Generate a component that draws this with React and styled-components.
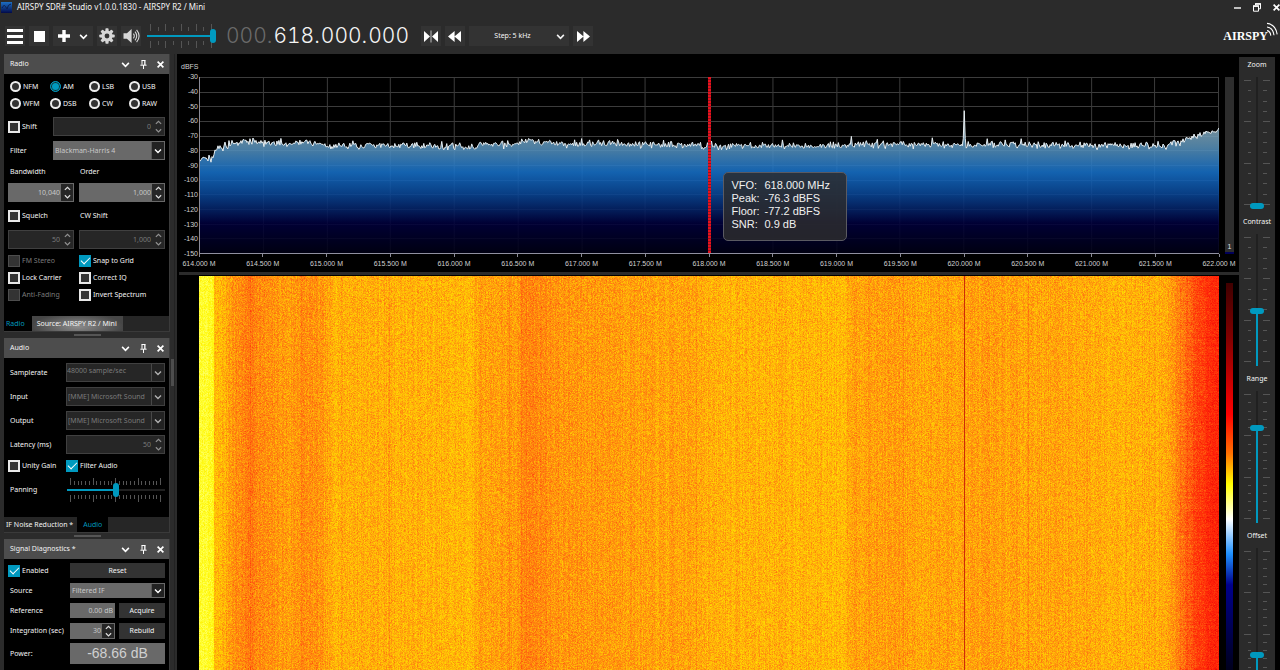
import { useLayoutEffect, useRef, useState } from 'react';
import styled, { createGlobalStyle, css } from 'styled-components';

const color = {
  chrome: '#2b2b2b',
  button: '#333333',
  header: '#4d4d4d',
  field: '#696969',
  dark: '#262626',
  accent: '#0099bf',
  txt: '#f4f4f4',
  dim: '#7a7a7a',
};

/* ---------- signal data ---------- */

const makeRandom = (seed) => {
  let s = seed;
  return () => {
    s = (s * 1664525 + 1013904223) % 4294967296;
    return s / 4294967296;
  };
};

const SPAN = 1020;

// noise floor in dBFS along the band
const FLOOR = [
  [0, -86], [12, -85], [14, -84], [15, -78], [26, -77], [30, -75.5], [40, -74.6], [52, -73.6],
  [66, -75], [90, -75.8], [102, -74.9], [118, -75.2], [132, -76.8], [190, -76.8], [205, -77],
  [240, -77.2], [272, -77.4], [282, -76], [318, -75.8], [324, -74], [345, -74.6], [360, -75.4],
  [430, -75.6], [450, -76.2], [500, -76.2], [512, -77], [580, -77.1], [644, -77.4],
  [652, -75.9], [700, -75.8], [720, -76.3], [770, -76], [860, -76.2], [930, -76.9],
  [968, -76.6], [980, -74], [990, -71.8], [1000, -69.8], [1010, -68], [1020, -67],
];

const LINES = { 51: 1.8, 102: 1.2, 142: 1, 190: 2, 218: 1, 281: 1.3, 310: 1, 322: 1.6, 497: 1.6, 704: 1.2, 829: 1.4 };

const floorAt = (x) => {
  const i = FLOOR.findIndex(([px]) => px >= x);
  if (i <= 0) return FLOOR[0][1];
  const [x0, v0] = FLOOR[i - 1];
  const [x1, v1] = FLOOR[i];
  return v0 + ((v1 - v0) * (x - x0)) / (x1 - x0);
};

const dbToY = (db) => ((-30 - db) * 176) / 120;

const buildTrace = () => {
  const rnd = makeRandom(91);
  const points = [];
  for (let x = 0; x <= SPAN; x += 1) {
    const noise = (rnd() + rnd() + rnd() - 1.5) * 2.6;
    const peak = rnd() > 0.95 ? 2 : 0;
    let db = floorAt(x) + noise + peak;
    if (x === 764 || x === 766) db = -72;
    if (x === 765) db = -53;
    points.push(`${x},${dbToY(db).toFixed(1)}`);
  }
  return points.join(' ');
};

const TRACE = buildTrace();

const HEAT = [
  [-92, 255, 255, 150], [-87, 255, 255, 80], [-84, 255, 250, 20], [-80, 255, 222, 0],
  [-77, 255, 184, 8], [-75, 255, 148, 14], [-72, 255, 104, 16], [-69, 255, 60, 10],
  [-66, 255, 32, 8], [-60, 215, 0, 0],
];

const heat = (db) => {
  if (db <= HEAT[0][0]) return HEAT[0].slice(1);
  for (let i = 1; i < HEAT.length; i += 1) {
    if (db <= HEAT[i][0]) {
      const a = HEAT[i - 1];
      const b = HEAT[i];
      const t = (db - a[0]) / (b[0] - a[0]);
      return [1, 2, 3].map((k) => a[k] + (b[k] - a[k]) * t);
    }
  }
  return HEAT[HEAT.length - 1].slice(1);
};

const Waterfall = () => {
  const ref = useRef(null);

  useLayoutEffect(() => {
    const canvas = ref.current;
    const draw = () => {
      const w = canvas.clientWidth;
      const h = canvas.clientHeight;
      if (!w || !h) return;
      canvas.width = w;
      canvas.height = h;
      const ctx = canvas.getContext('2d');
      const img = ctx.createImageData(w, h);
      const rnd = makeRandom(7);
      const columns = Array.from({ length: w }, (_, x) => {
        const pos = Math.round((x * SPAN) / w);
        return floorAt(pos) + 0.3 + (LINES[pos] || 0) + (rnd() - 0.5) * 1.4;
      });
      const carrier = Math.round((765 * w) / SPAN);
      for (let y = 0; y < h; y += 1) {
        const row = (rnd() - 0.5) * 1.4;
        for (let x = 0; x < w; x += 1) {
          const edge = x / w > 0.96 ? row + Math.min(0.8, y / 300) : 0;
          const db = columns[x] + edge + (rnd() + rnd() + rnd() - 1.5) * 2.6;
          const [r, g, b] = x === carrier ? [205, 45, 6] : heat(db);
          const at = (y * w + x) * 4;
          img.data[at] = r;
          img.data[at + 1] = g;
          img.data[at + 2] = b;
          img.data[at + 3] = 255;
        }
      }
      ctx.putImageData(img, 0, 0);
    };
    draw();
    window.addEventListener('resize', draw);
    return () => window.removeEventListener('resize', draw);
  }, []);

  return <WaterfallCanvas ref={ref} aria-label='Waterfall' />;
};

/* ---------- small drawings ---------- */

const Chevron = ({ up, size = 7 }) => (
  <svg width={size} height={size} viewBox='0 0 8 8' aria-hidden='true'>
    <path
      d={up ? 'M1 5.6 4 2.6 7 5.6' : 'M1 2.6 4 5.6 7 2.6'}
      fill='none'
      stroke='currentColor'
      strokeWidth='1.4'
    />
  </svg>
);

const PinIcon = () => (
  <svg width='7' height='9' viewBox='0 0 7 9' aria-hidden='true'>
    <path d='M1.5 .5h4M2 .5v4.3M.4 5.2h6.2M3.5 5v4' fill='none' stroke='currentColor' />
    <path d='M4.2 .5h1.3v4.5H4.2z' fill='currentColor' />
  </svg>
);

const CrossIcon = ({ size = 7 }) => (
  <svg width={size} height={size} viewBox='0 0 7 7' aria-hidden='true'>
    <path d='M.6 .6 6.4 6.4M6.4 .6 .6 6.4' stroke='currentColor' strokeWidth='1.7' />
  </svg>
);

const GearIcon = () => (
  <svg width='16' height='16' viewBox='0 0 16 16' aria-hidden='true'>
    <g fill='currentColor'>
      {[0, 45, 90, 135].map((a) => (
        <rect key={a} x='6.4' y='.3' width='3.2' height='15.4' rx='.8' transform={`rotate(${a} 8 8)`} />
      ))}
      <circle cx='8' cy='8' r='5.6' />
    </g>
    <circle cx='8' cy='8' r='2.4' fill={color.button} />
  </svg>
);

const SpeakerIcon = () => (
  <svg width='17' height='16' viewBox='0 0 17 16' aria-hidden='true'>
    <path d='M.5 5.2h3.4L8.6 1v14L3.9 10.8H.5z' fill='currentColor' />
    <path
      d='M10.4 5.6q1.8 2.4 0 4.8M12 3.6q3.4 4.4 0 8.8M13.6 1.8q5 6.2 0 12.4'
      fill='none'
      stroke='currentColor'
      strokeWidth='1.1'
    />
  </svg>
);

const SkipIcon = ({ kind }) => {
  const paths = {
    center: 'M0 1 6 6.5 0 12zM14 1 8 6.5 14 12z',
    back: 'M6.6 1 0 6.5 6.6 12zM13 1 6.4 6.5 13 12z',
    forward: 'M1 1 7.6 6.5 1 12zM7.4 1 14 6.5 7.4 12z',
  };
  return (
    <svg width='14' height='13' viewBox='0 0 14 13' aria-hidden='true'>
      <path d={paths[kind]} fill='currentColor' />
      {kind === 'center' && <path d='M7 .5v12' stroke='#bdbdbd' />}
    </svg>
  );
};

// tick scale shown on both sides of a slider
const Scale = ({ vertical, length, count, every, inset }) => {
  const breadth = 26;
  const step = (length - inset * 2) / (count - 1);
  return (
    <ScaleSvg width={vertical ? breadth : length} height={vertical ? length : breadth} aria-hidden='true'>
      {Array.from({ length: count }, (_, i) => {
        const at = Math.round(inset + i * step);
        const major = i % every === 0;
        const size = major ? 7 : 4;
        return vertical ? (
          <g key={i}>
            <rect x={major ? 0 : 4} y={at - 1} width={major ? 7 : 3} height='1' />
            <rect x='19' y={at - 1} width={size} height='1' />
          </g>
        ) : (
          <g key={i}>
            <rect x={at - 1} y={8 - size} width='1' height={size} />
            <rect x={at - 1} y='18' width='1' height={size} />
          </g>
        );
      })}
    </ScaleSvg>
  );
};

/* ---------- form parts ---------- */

const Slider = ({ label, vertical, length, count, every, start, inset = 4 }) => {
  const [value, setValue] = useState(start);
  return (
    <SliderBox>
      <Scale vertical={vertical} length={length} count={count} every={every} inset={inset} />
      <RangeInput
        type='range'
        aria-label={label}
        min='0'
        max='1000'
        value={value}
        onChange={(e) => setValue(Number(e.target.value))}
        $vertical={vertical}
        $length={length}
        $fill={value / 10}
      />
    </SliderBox>
  );
};

const Spin = ({ label, value, disabled }) => (
  <FieldBox $disabled={disabled}>
    <FieldInput aria-label={label} defaultValue={value} disabled={disabled} size={1} />
    <SpinButtons>
      <button type='button' aria-label={`${label} up`} disabled={disabled}>
        <Chevron up />
      </button>
      <button type='button' aria-label={`${label} down`} disabled={disabled}>
        <Chevron />
      </button>
    </SpinButtons>
  </FieldBox>
);

const Select = ({ label, value, disabled, raised }) => (
  <FieldBox $disabled={disabled}>
    <FieldSelect aria-label={label} disabled={disabled} $raised={raised}>
      <option>{value}</option>
    </FieldSelect>
    <SelectArrow $disabled={disabled}>
      <Chevron size={8} />
    </SelectArrow>
  </FieldBox>
);

const Check = ({ label, checked, disabled }) => (
  <CheckLabel $disabled={disabled}>
    <CheckInput type='checkbox' defaultChecked={checked} disabled={disabled} />
    {label}
  </CheckLabel>
);

const PanelHeader = ({ title }) => (
  <HeaderBar>
    <h2>{title}</h2>
    <button type='button' aria-label='Collapse'>
      <Chevron size={9} />
    </button>
    <button type='button' aria-label='Pin'>
      <PinIcon />
    </button>
    <button type='button' aria-label='Close'>
      <CrossIcon />
    </button>
  </HeaderBar>
);

/* ---------- panels ---------- */

const RadioPanel = () => (
  <Panel>
    <PanelHeader title='Radio' />
    <PanelBody>
      <ModeGrid>
        {['NFM', 'AM', 'LSB', 'USB', 'WFM', 'DSB', 'CW', 'RAW'].map((mode) => (
          <ModeLabel key={mode}>
            <ModeInput type='radio' name='mode' defaultChecked={mode === 'AM'} />
            {mode}
          </ModeLabel>
        ))}
      </ModeGrid>
      <Stack>
        <Row $label={45}>
          <Check label='Shift' />
          <Spin label='Shift' value='0' disabled />
        </Row>
        <Row $label={45}>
          <RowLabel>Filter</RowLabel>
          <Select label='Filter' value='Blackman-Harris 4' />
        </Row>
        <PairRow $height={13}>
          <RowLabel>Bandwidth</RowLabel>
          <RowLabel $flush>Order</RowLabel>
        </PairRow>
        <PairRow $height={19}>
          <Spin label='Bandwidth' value='10,040' />
          <Spin label='Order' value='1,000' />
        </PairRow>
        <PairRow $height={18}>
          <Check label='Squelch' />
          <RowLabel $flush>CW Shift</RowLabel>
        </PairRow>
        <PairRow $height={19}>
          <Spin label='Squelch' value='50' disabled />
          <Spin label='CW Shift' value='1,000' disabled />
        </PairRow>
      </Stack>
      <CheckGrid>
        <Check label='FM Stereo' disabled />
        <Check label='Snap to Grid' checked />
        <Check label='Lock Carrier' />
        <Check label='Correct IQ' />
        <Check label='Anti-Fading' disabled />
        <Check label='Invert Spectrum' />
      </CheckGrid>
    </PanelBody>
    <TabBar>
      <Tab type='button' $active>Radio</Tab>
      <Tab type='button' $glow>Source: AIRSPY R2 / Mini</Tab>
    </TabBar>
  </Panel>
);

const AudioPanel = () => (
  <Panel>
    <PanelHeader title='Audio' />
    <PanelBody $top={5}>
      <Stack>
        <Row $label={58}>
          <RowLabel>Samplerate</RowLabel>
          <Select label='Samplerate' value='48000 sample/sec' disabled raised />
        </Row>
        <Row $label={58}>
          <RowLabel>Input</RowLabel>
          <Select label='Input' value='[MME] Microsoft Sound' disabled />
        </Row>
        <Row $label={58}>
          <RowLabel>Output</RowLabel>
          <Select label='Output' value='[MME] Microsoft Sound' disabled />
        </Row>
        <Row $label={58}>
          <RowLabel>Latency (ms)</RowLabel>
          <Spin label='Latency' value='50' disabled />
        </Row>
      </Stack>
      <CheckPair>
        <Check label='Unity Gain' />
        <Check label='Filter Audio' checked />
      </CheckPair>
      <PanningRow>
        <RowLabel>Panning</RowLabel>
        <Slider label='Panning' length={98} count={25} every={6} start={500} />
      </PanningRow>
    </PanelBody>
    <TabBar>
      <Tab type='button'>IF Noise Reduction *</Tab>
      <Tab type='button' $active>Audio</Tab>
    </TabBar>
  </Panel>
);

const DiagnosticsPanel = () => (
  <Panel $last>
    <PanelHeader title='Signal Diagnostics *' />
    <PanelBody>
      <Stack>
        <Row $label={62} $height={15}>
          <Check label='Enabled' checked />
          <PanelButton type='button'>Reset</PanelButton>
        </Row>
        <Row $label={62} $height={15}>
          <RowLabel>Source</RowLabel>
          <Select label='Source' value='Filtered IF' />
        </Row>
        <Row $label={62} $height={15}>
          <RowLabel>Reference</RowLabel>
          <Split>
            <FieldBox>
              <FieldInput aria-label='Reference' defaultValue='0.00 dB' size={1} />
            </FieldBox>
            <PanelButton type='button'>Acquire</PanelButton>
          </Split>
        </Row>
        <Row $label={62} $height={15}>
          <RowLabel>Integration (sec)</RowLabel>
          <Split>
            <Spin label='Integration' value='30' />
            <PanelButton type='button'>Rebuild</PanelButton>
          </Split>
        </Row>
        <Row $label={62} $height={21}>
          <RowLabel>Power:</RowLabel>
          <PowerOutput>-68.66 dB</PowerOutput>
        </Row>
      </Stack>
    </PanelBody>
  </Panel>
);

const frequencies = Array.from({ length: 17 }, (_, i) => `${(614 + i / 2).toFixed(3)} M`);
const levels = Array.from({ length: 13 }, (_, i) => -30 - i * 10);

const Spectrum = () => (
  <SpectrumArea>
    <Unit>dBFS</Unit>
    <AxisY>
      {levels.map((v) => (
        <span key={v}>{v}</span>
      ))}
    </AxisY>
    <Plot>
      <svg width='100%' height='100%' viewBox='0 0 1020 176' preserveAspectRatio='none' role='img' aria-label='Spectrum'>
        <defs>
          <linearGradient id='fill' gradientUnits='userSpaceOnUse' x1='0' y1='0' x2='0' y2='176'>
            <stop offset='.28' stopColor='#86a4b0' />
            <stop offset='.4' stopColor='#5890b8' />
            <stop offset='.54' stopColor='#1670c8' />
            <stop offset='.66' stopColor='#0a4898' />
            <stop offset='.76' stopColor='#042064' />
            <stop offset='.83' stopColor='#00003c' />
            <stop offset='1' stopColor='#000014' />
          </linearGradient>
        </defs>
        <g stroke='#3c3c3c'>
          {levels.slice(0, -1).map((v) => (
            <line key={v} x1='0' x2='1020' y1={Math.round(dbToY(v)) + 0.5} y2={Math.round(dbToY(v)) + 0.5} />
          ))}
          {frequencies.map((f, i) => (
            <line key={f} y1='0' y2='176' x1={Math.round(i * 63.75) - 0.5} x2={Math.round(i * 63.75) - 0.5} />
          ))}
        </g>
        <polygon points={`0,176 ${TRACE} 1020,176`} fill='url(#fill)' fillOpacity='.88' />
        <polyline points={TRACE} fill='none' stroke='#e6eef2' strokeWidth='1' />
      </svg>
      <VfoLine />
      <Tooltip role='status'>
        <span>VFO:</span>
        <span>618.000 MHz</span>
        <span>Peak:</span>
        <span>-76.3 dBFS</span>
        <span>Floor:</span>
        <span>-77.2 dBFS</span>
        <span>SNR:</span>
        <span>0.9 dB</span>
      </Tooltip>
    </Plot>
    <Meter>1</Meter>
    <AxisX>
      {frequencies.map((f) => (
        <span key={f}>{f}</span>
      ))}
    </AxisX>
  </SpectrumArea>
);

const App = () => (
  <Page>
    <GlobalStyle />
    <TitleBar>
      <svg width='11' height='11' viewBox='0 0 11 11' aria-hidden='true'>
        <defs>
          <linearGradient id='icon' x1='0' y1='0' x2='0' y2='1'>
            <stop offset='0' stopColor='#1d6fc4' />
            <stop offset='1' stopColor='#020a4a' />
          </linearGradient>
        </defs>
        <rect width='11' height='11' fill='url(#icon)' />
        <path d='M1 6q2-4 3.5-1.5T6 7q1-5 4-5' fill='none' stroke='#0a2050' />
      </svg>
      <h1>AIRSPY SDR# Studio v1.0.0.1830 - AIRSPY R2 / Mini</h1>
      <WindowButtons>
        <button type='button' aria-label='Minimize'>
          <svg width='7' height='7' viewBox='0 0 7 7'>
            <path d='M0 4h7' stroke='currentColor' strokeWidth='1.4' />
          </svg>
        </button>
        <button type='button' aria-label='Restore'>
          <svg width='8' height='9' viewBox='0 0 8 9'>
            <path d='M2.5 2V.8h5v5H6M.5 3.2h5v5h-5z' fill='none' stroke='currentColor' />
            <path d='M0 3h6M2 1h6' stroke='currentColor' strokeWidth='1.4' />
          </svg>
        </button>
        <button type='button' aria-label='Close window'>
          <CrossIcon />
        </button>
      </WindowButtons>
    </TitleBar>

    <Toolbar>
      <ToolButton type='button' aria-label='Menu'>
        <svg width='16' height='15' viewBox='0 0 16 15'>
          <path d='M0 1.5h16M0 7.5h16M0 13.5h16' stroke='currentColor' strokeWidth='2.8' />
        </svg>
      </ToolButton>
      <ToolButton type='button' aria-label='Stop'>
        <svg width='11' height='11' viewBox='0 0 11 11'>
          <rect width='11' height='11' fill='currentColor' />
        </svg>
      </ToolButton>
      <ToolButton type='button' aria-label='Add' $wide>
        <svg width='12' height='12' viewBox='0 0 12 12'>
          <path d='M6 0v12M0 6h12' stroke='currentColor' strokeWidth='3.4' />
        </svg>
        <Chevron size={9} />
      </ToolButton>
      <ToolButton type='button' aria-label='Settings' $soft>
        <GearIcon />
      </ToolButton>
      <ToolButton type='button' aria-label='Mute' $soft>
        <SpeakerIcon />
      </ToolButton>
      <VolumeSlot>
        <Slider label='Volume' length={69} count={9} every={2} start={1000} />
      </VolumeSlot>
      <Frequency>
        <i>
          000<b>.</b>
        </i>
        618<b>.</b>000<b>.</b>000
      </Frequency>
      <ToolButton type='button' aria-label='Center'>
        <SkipIcon kind='center' />
      </ToolButton>
      <ToolButton type='button' aria-label='Step back'>
        <SkipIcon kind='back' />
      </ToolButton>
      <StepBox>
        <select aria-label='Step'>
          <option>Step: 5 kHz</option>
        </select>
        <Chevron size={9} />
      </StepBox>
      <ToolButton type='button' aria-label='Step forward'>
        <SkipIcon kind='forward' />
      </ToolButton>
      <Brand>
        AIRSPY
        <svg width='11' height='15' viewBox='0 0 11 15' aria-hidden='true'>
          <path
            d='M0 8.6q3.4.6 3.8 5M0 5q6 .8 7 8.2M0 1.4q8.8 1 10.2 11'
            fill='none'
            stroke='currentColor'
            strokeWidth='1.1'
          />
        </svg>
      </Brand>
    </Toolbar>

    <Body>
      <Dock>
        <DockPanels>
          <RadioPanel />
          <Splitter />
          <AudioPanel />
          <Splitter />
          <DiagnosticsPanel />
        </DockPanels>
        <ScrollTrack>
          <ScrollThumb />
        </ScrollTrack>
      </Dock>

      <Display>
        <Spectrum />
        <Divider />
        <WaterfallRow>
          <Waterfall />
          <HeatBar />
        </WaterfallRow>
      </Display>

      <SliderColumn>
        <SliderTitle>Zoom</SliderTitle>
        <Slider label='Zoom' vertical length={132} count={13} every={4} start={0} />
        <SliderTitle>Contrast</SliderTitle>
        <Slider label='Contrast' vertical length={132} count={13} every={4} start={410} />
        <SliderTitle>Range</SliderTitle>
        <Slider label='Range' vertical length={132} count={16} every={5} start={730} />
        <SliderTitle>Offset</SliderTitle>
        <Slider label='Offset' vertical length={132} count={16} every={5} start={175} />
      </SliderColumn>
    </Body>
  </Page>
);

/* ---------- styles ---------- */

const GlobalStyle = createGlobalStyle`
  * {
    box-sizing: border-box;
  }
  body {
    margin: 0;
    background: #000;
    color: ${color.txt};
    font: 7px/10px 'Noto Sans', 'Open Sans', sans-serif;
  }
  button, input, select {
    margin: 0;
    padding: 0;
    border: 0;
    border-radius: 0;
    background: none;
    color: inherit;
    font: inherit;
    appearance: none;
    outline: none;
  }
  select:disabled {
    opacity: 1;
  }
  h1, h2 {
    margin: 0;
    font-weight: 400;
  }
  svg {
    display: block;
    flex: none;
  }
`;

const Page = styled.div`
  display: flex;
  flex-direction: column;
  height: 100vh;
  overflow: hidden;
`;

const TitleBar = styled.header`
  display: flex;
  align-items: center;
  gap: 5px;
  height: 14px;
  padding-left: 1px;
  background: ${color.chrome};
  h1 {
    flex: 1;
    font-size: 8px;
    line-height: 14px;
  }
`;

const WindowButtons = styled.div`
  display: flex;
  gap: 12px;
  color: #fff;
  button {
    display: flex;
    align-items: center;
  }
`;

const Toolbar = styled.div`
  display: flex;
  align-items: center;
  gap: 4px;
  height: 40px;
  padding: 4px 2px 0 5px;
  background: ${color.chrome};
`;

const ToolButton = styled.button`
  display: flex;
  align-items: center;
  justify-content: center;
  gap: 9px;
  width: ${(props) => (props.$wide ? '40px' : '20px')};
  height: 20px;
  background: ${color.button};
  color: ${(props) => (props.$soft ? '#d6d6d6' : '#fff')};
`;

const VolumeSlot = styled.div`
  margin: 0 6px 0 2px;
`;

const Frequency = styled.output`
  margin-right: 8px;
  color: #f4f4f4;
  font: 300 21px/24px Inter, 'Noto Sans', sans-serif;
  font-variant-numeric: tabular-nums;
  i {
    color: #6a6a6a;
    font-style: normal;
  }
  b {
    padding-right: 1px;
    font-weight: 300;
  }
`;

const StepBox = styled.div`
  display: flex;
  align-items: center;
  width: 100px;
  height: 20px;
  padding-right: 4px;
  background: ${color.button};
  select {
    flex: 1;
    height: 20px;
    text-align-last: center;
  }
`;

const Brand = styled.div`
  display: flex;
  align-items: flex-start;
  margin-left: auto;
  color: #fff;
  font: 700 12px/22px 'Liberation Serif', serif;
  svg {
    margin-top: -3px;
    margin-left: -1px;
  }
`;

const Body = styled.main`
  display: flex;
  flex: 1;
  min-height: 0;
  padding-right: 5px;
`;

const Dock = styled.aside`
  display: flex;
  width: 177px;
  padding-left: 4px;
  background: ${color.chrome};
`;

const DockPanels = styled.div`
  display: flex;
  flex-direction: column;
  width: 166px;
`;

const ScrollTrack = styled.div`
  width: 5px;
  padding: 305px 0 0 1px;
  border-right: 1px solid #222;
`;

const ScrollThumb = styled.div`
  height: 27px;
  background: ${color.header};
`;

const Splitter = styled.div`
  display: flex;
  flex: none;
  align-items: center;
  justify-content: center;
  height: 6px;
  &::before {
    content: '';
    width: 27px;
    height: 2px;
    background: #555;
  }
`;

const Panel = styled.section`
  display: flex;
  flex: ${(props) => (props.$last ? '1' : 'none')};
  flex-direction: column;
  background: #000;
  border-right: 1px solid #3a3a3a;
`;

const HeaderBar = styled.div`
  display: flex;
  flex: none;
  align-items: center;
  gap: 10px;
  height: 20px;
  padding: 0 5px 0 6px;
  background: ${color.header};
  h2 {
    flex: 1;
    font-size: 7px;
  }
  button {
    display: flex;
    color: #fff;
  }
`;

const PanelBody = styled.div`
  padding: ${(props) => props.$top || 4}px 4px 13px;
`;

const ModeGrid = styled.div`
  display: grid;
  grid-template-columns: 40px 39px 40px 1fr;
  grid-auto-rows: 17px;
  padding: 0 0 5px 2px;
`;

const ModeLabel = styled.label`
  display: flex;
  align-items: center;
  gap: 2px;
`;

const ModeInput = styled.input`
  flex: none;
  width: 11px;
  height: 11px;
  border: 2px solid #eee;
  border-radius: 50%;
  background: ${color.button};
  &:checked {
    border: 1px solid ${color.accent};
    background: ${color.accent};
    box-shadow: inset 0 0 0 1px #133;
  }
`;

const Stack = styled.div`
  display: flex;
  flex-direction: column;
  gap: 5px;
`;

const Row = styled.div`
  display: grid;
  grid-template-columns: ${(props) => props.$label}px 1fr;
  height: ${(props) => props.$height || 19}px;
`;

const PairRow = styled.div`
  display: grid;
  grid-template-columns: 66px 86px;
  gap: 5px;
  height: ${(props) => props.$height}px;
`;

const RowLabel = styled.span`
  align-self: center;
  padding-left: ${(props) => (props.$flush ? '1px' : '2px')};
  white-space: nowrap;
`;

const CheckGrid = styled.div`
  display: grid;
  grid-template-columns: 71px 1fr;
  grid-auto-rows: 17px;
  margin-top: 3px;
`;

const CheckPair = styled(CheckGrid)`
  grid-template-columns: 58px 1fr;
`;

const PanningRow = styled.div`
  display: grid;
  grid-template-columns: 59px 1fr;
  padding: 3px 0 1px;
`;

const CheckLabel = styled.label`
  display: flex;
  align-items: center;
  gap: 2px;
  color: ${(props) => (props.$disabled ? color.dim : 'inherit')};
  white-space: nowrap;
`;

const CheckInput = styled.input`
  flex: none;
  width: 12px;
  height: 12px;
  border: 2px solid #e8e8e8;
  background: ${color.button};
  &:disabled {
    border: 1px solid #4d4d4d;
  }
  &:checked {
    display: grid;
    place-items: center;
    border: 0;
    background: ${color.accent};
  }
  &:checked::before {
    content: '';
    width: 8px;
    height: 4px;
    margin-bottom: 2px;
    border: solid #fff;
    border-width: 0 0 1px 1px;
    transform: rotate(-45deg);
  }
`;

const FieldBox = styled.div`
  display: flex;
  min-width: 0;
  border: 1px solid ${(props) => (props.$disabled ? '#404040' : color.field)};
  background: ${(props) => (props.$disabled ? color.dark : color.field)};
  color: ${(props) => (props.$disabled ? color.dim : '#c8c8c8')};
`;

const FieldInput = styled.input`
  flex: 1;
  min-width: 0;
  padding-right: 1px;
  text-align: right;
`;

const FieldSelect = styled.select`
  flex: 1;
  min-width: 0;
  padding: ${(props) => (props.$raised ? '0 0 4px' : '0 0 0 1px')};
`;

const SelectArrow = styled.span`
  display: flex;
  align-items: center;
  justify-content: center;
  width: 13px;
  border-left: 1px solid ${(props) => (props.$disabled ? '#484848' : '#555')};
  background: #222;
  color: ${(props) => (props.$disabled ? '#b0b0b0' : '#fff')};
  pointer-events: none;
`;

const SpinButtons = styled.span`
  display: flex;
  flex-direction: column;
  width: 12px;
  background: ${color.dark};
  color: #ddd;
  button {
    display: flex;
    flex: 1;
    align-items: center;
    justify-content: center;
    min-height: 0;
  }
  button:disabled {
    color: #909090;
  }
`;

const Split = styled.div`
  display: grid;
  grid-template-columns: 45px 1fr;
  gap: 4px;
`;

const PanelButton = styled.button`
  background: ${color.button};
  text-align: center;
`;

const PowerOutput = styled.output`
  background: ${color.field};
  color: #d0d0d0;
  font: 14px/21px 'Liberation Sans', Arial, sans-serif;
  text-align: center;
`;

const TabBar = styled.div`
  display: flex;
  height: 16px;
  background: ${color.dark};
  border-bottom: 1px solid #3a3a3a;
`;

const Tab = styled.button`
  padding: 0 4px 0 2px;
  white-space: nowrap;
  ${(props) =>
    props.$active &&
    css`
      padding: 0 7px 0 2px;
      background: #000;
      color: ${color.accent};
      &:last-child {
        padding: 0 6px;
      }
    `}
  ${(props) =>
    props.$glow &&
    css`
      padding: 0 6px 0 5px;
      background: radial-gradient(ellipse 50% 90% at 50% 70%, #8c8c8c, #464646);
    `}
`;

const Display = styled.div`
  display: flex;
  flex: 1;
  flex-direction: column;
  min-width: 0;
  background: #000;
`;

const SpectrumArea = styled.div`
  display: grid;
  grid-template-columns: 22px 1fr 20px;
  grid-template-rows: 23px 177px 18px;
  color: #d0d0d0;
  font: 7px/10px 'Liberation Sans', Arial, sans-serif;
`;

const Unit = styled.span`
  grid-column: 1 / -1;
  padding: 8px 0 0 4px;
`;

const AxisY = styled.div`
  display: flex;
  flex-direction: column;
  justify-content: space-between;
  padding-right: 1px;
  text-align: right;
  span {
    height: 0;
    line-height: 0;
  }
`;

const Plot = styled.div`
  position: relative;
  min-width: 0;
  border-bottom: 1px solid #9090a0;
  border-left: 1px solid #8a8a96;
`;

const VfoLine = styled.div`
  position: absolute;
  top: 0;
  bottom: 0;
  left: calc(50% - 2px);
  width: 3px;
  background: repeating-linear-gradient(#e8101c 0 2px, #8c1620 2px 3px);
`;

const Tooltip = styled.div`
  position: absolute;
  top: 95px;
  left: calc(50% + 13px);
  display: grid;
  grid-template-columns: 33px 1fr;
  grid-auto-rows: 13px;
  width: 124px;
  height: 69px;
  padding: 6px 8px;
  border: 1px solid #5a5a62;
  border-radius: 5px;
  background: rgba(44, 44, 46, 0.85);
  color: #f0f0f0;
  font-size: 11px;
  line-height: 13px;
  white-space: nowrap;
`;

const Meter = styled.div`
  display: flex;
  align-items: flex-end;
  justify-content: center;
  margin: 0 5px 0 6px;
  border-bottom: 2px solid #00005a;
  background: #2d2d2d;
  color: #e0e0e0;
`;

const AxisX = styled.div`
  display: flex;
  grid-column: 2;
  justify-content: space-between;
  span {
    display: flex;
    flex-direction: column;
    align-items: center;
    width: 0;
    white-space: nowrap;
  }
  span::before {
    content: '';
    width: 1px;
    height: 3px;
    margin-bottom: 2px;
    background: #8a8a96;
  }
`;

const Divider = styled.div`
  height: 3px;
  margin: 0 0 1px 2px;
  background: ${color.chrome};
`;

const WaterfallRow = styled.div`
  display: flex;
  flex: 1;
  min-height: 0;
  padding-left: 22px;
`;

const WaterfallCanvas = styled.canvas`
  display: block;
  flex: 1;
  min-width: 0;
  height: 100%;
`;

const HeatBar = styled.div`
  width: 7px;
  margin: 7px 6px 0 7px;
  background: linear-gradient(
    #400000,
    #800000 14%,
    #ff0000 34%,
    #ff7000 44%,
    #ffff00 52%,
    #ffffff 61%,
    #1e90ff 70%,
    #00008c 78%,
    #00001c
  );
`;

const SliderColumn = styled.aside`
  width: 36px;
  margin-top: 3px;
  overflow: hidden;
  background: ${color.chrome};
`;

const SliderTitle = styled.div`
  margin-bottom: 4px;
  line-height: 16px;
  text-align: center;
`;

const SliderBox = styled.div`
  display: grid;
  justify-content: center;
  ${SliderColumn} & {
    margin-bottom: 5px;
  }
`;

const ScaleSvg = styled.svg`
  grid-area: 1 / 1;
  fill: #555;
`;

const RangeInput = styled.input`
  grid-area: 1 / 1;
  width: ${(props) => (props.$vertical ? 26 : props.$length)}px;
  height: ${(props) => (props.$vertical ? props.$length : 26)}px;
  background: ${(props) =>
      `linear-gradient(to ${props.$vertical ? 'top' : 'right'}, ${color.accent} ${props.$fill}%, #202020 ${props.$fill}%)`}
    center / ${(props) => (props.$vertical ? '2px 100%' : '100% 2px')} no-repeat;
  ${(props) =>
    props.$vertical &&
    css`
      writing-mode: vertical-lr;
      direction: rtl;
    `}
  &::-webkit-slider-thumb {
    width: ${(props) => (props.$vertical ? 14 : 6)}px;
    height: ${(props) => (props.$vertical ? 6 : 14)}px;
    border-radius: 3px;
    background: ${color.accent};
    appearance: none;
  }
`;

export default App;
